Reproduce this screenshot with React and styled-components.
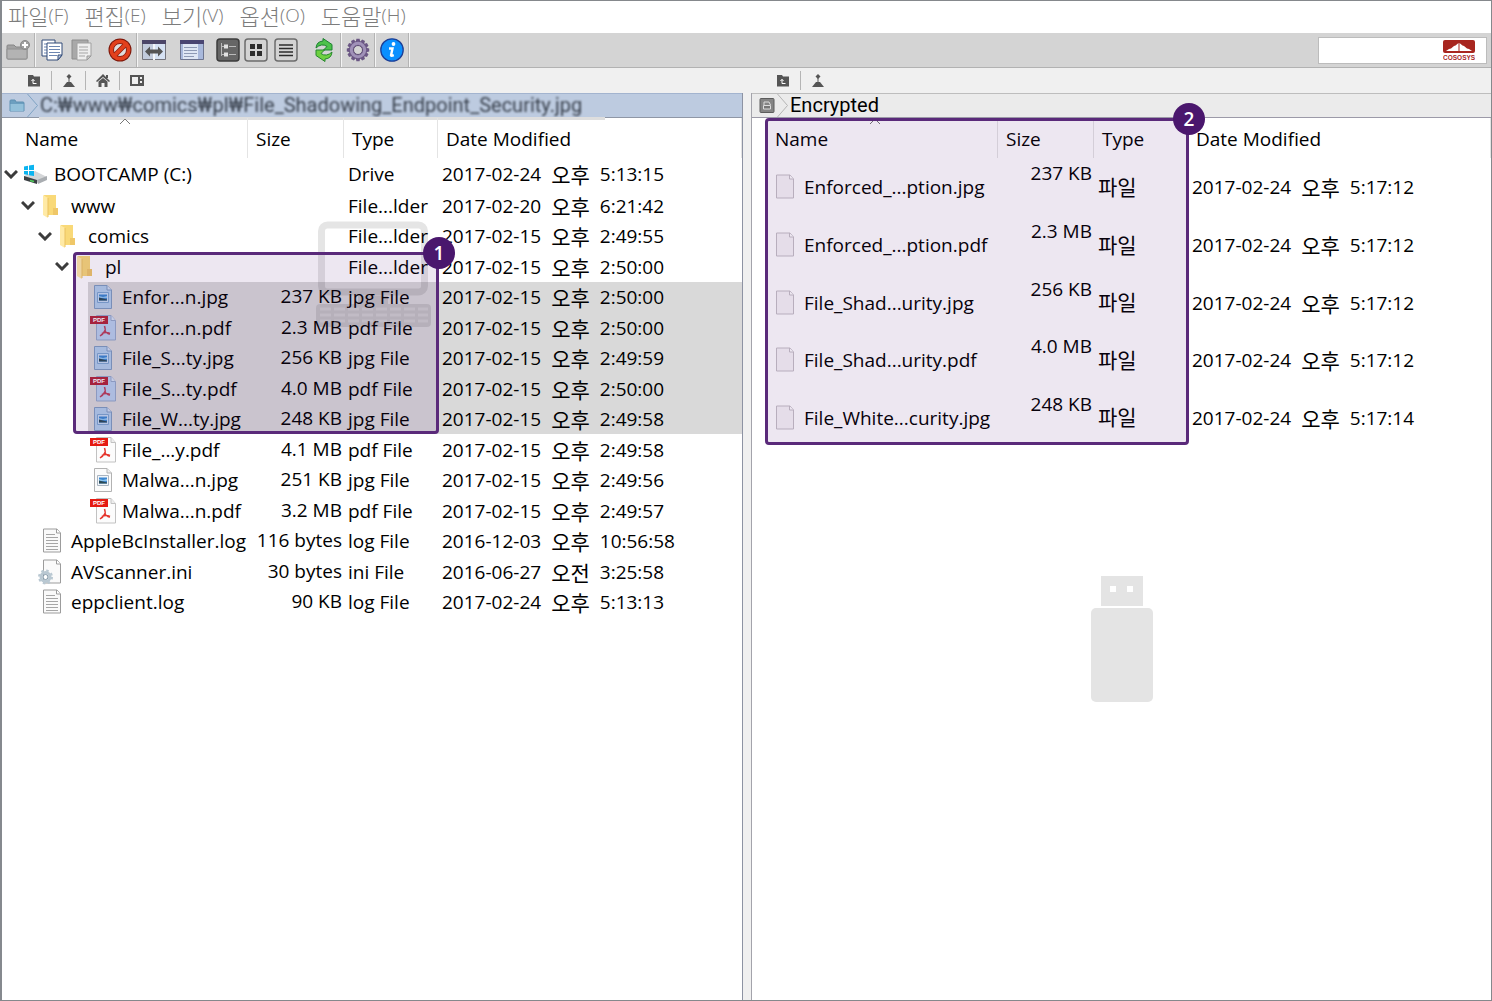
import React from "react";
import styled, { createGlobalStyle, css } from "styled-components";

const latin = '"Open Sans", "Noto Sans CJK KR", sans-serif';
const hangul = '"Noto Sans CJK KR", sans-serif';

const Global = createGlobalStyle`
  *, *::before, *::after { box-sizing: border-box; }
  body { margin: 0; background: #fff; font-family: ${latin}; font-size: 19px; color: #000; }
  button { font: inherit; color: inherit; background: none; border: 0; padding: 0; margin: 0; }
  svg { display: block; }
`;

const Frame = styled.div`
  min-height: 100vh;
  display: flex;
  flex-direction: column;
  border: 1px solid #85888c;
  border-left: 2px solid #85898e;
  background: #fff;
`;

const MenuBar = styled.nav`
  display: flex;
  align-items: center;
  gap: 16px;
  height: 32px;
  padding: 0 6px 4px;
`;
const MenuItem = styled.button`
  display: flex;
  align-items: center;
  font-size: 19px;
  font-weight: 300;
  line-height: 28px;
  color: #7c7c7c;
`;
const Korean = styled.span`
  font-family: ${hangul};
  font-weight: ${(p) => p.$weight || 400};
  font-size: ${(p) => (p.$weight ? 22 : 21)}px;
  line-height: ${(p) => (p.$weight ? 28 : 26)}px;
`;

const ToolBar = styled.div`
  display: flex;
  align-items: center;
  height: 35px;
  background: #d4d4d4;
  border-bottom: 1px solid #b2b2b2;
`;
const Group = styled.div`
  display: flex;
  align-items: center;
  height: 34px;
  padding: 0 3px 0 2px;
  border-right: 1px solid #f4f4f4;
  box-shadow: inset -1px 0 0 #b4b4b4;
`;
const ToolButton = styled.button`
  width: 28px;
  height: 28px;
  display: grid;
  place-items: center;
  margin-left: ${(p) => p.$gap || 0}px;
`;
const Search = styled.label`
  margin-left: auto;
  margin-right: 4px;
  display: flex;
  align-items: center;
  width: 169px;
  height: 27px;
  padding-right: 11px;
  background: #fff;
  border: 1px solid #bcbcbc;
`;
const SearchInput = styled.input`
  flex: 1;
  min-width: 0;
  height: 24px;
  border: 0;
  outline: 0;
  background: transparent;
  font: inherit;
`;

const Panes = styled.main`
  flex: 1;
  display: grid;
  grid-template-columns: 741fr 740fr;
  column-gap: 8px;
  background: #f0f0f0;
`;
const Pane = styled.section`
  display: flex;
  flex-direction: column;
  min-width: 0;
`;
const NavRow = styled.div`
  display: flex;
  align-items: center;
  height: 25px;
  padding-left: 15px;
`;
const NavButton = styled.button`
  width: 34px;
  height: 19px;
  display: grid;
  place-items: center;
  & + & { border-left: 1px solid #b5b5b5; }
`;
const PaneBody = styled.div`
  flex: 1;
  position: relative;
  background: #fff;
  ${(p) => (p.$second
    ? css`border-left: 1px solid #a3a3ab;`
    : css`border-right: 1px solid #8d93a3;`)}
`;
const PathBar = styled.div`
  position: relative;
  display: flex;
  align-items: center;
  height: 25px;
  padding-left: 7px;
  gap: 1px;
  background: ${(p) => (p.$active ? "#bdcbe0" : "#ebebeb")};
  border-top: 1px solid ${(p) => (p.$active ? "#a3b4cf" : "#bdbdbd")};
  border-bottom: 1px solid ${(p) => (p.$active ? "#8f97a6" : "#9c9aa8")};
  ${(p) => p.$active && css`
    &::after {
      content: "";
      position: absolute;
      left: 37px;
      top: 23px;
      width: 566px;
      height: 3px;
      background: #dedede;
    }
  `}
`;
const PathText = styled.span`
  font-family: Roboto, "Noto Sans CJK KR", sans-serif;
  font-size: 20px;
  line-height: 23px;
  white-space: nowrap;
  color: #000;
  ${(p) => p.$masked && css`
    color: #39414d;
    filter: blur(1px);
  `}
`;

const Table = styled.table`
  width: 100%;
  table-layout: fixed;
  border-collapse: collapse;
`;
const Col = styled.col`
  width: ${(p) => p.$w}px;
`;
const HeadCell = styled.th`
  position: relative;
  height: 40px;
  padding: 2px 0 0 ${(p) => (p.$first ? 23 : 8)}px;
  text-align: left;
  font-weight: 400;
  line-height: 28px;
  white-space: nowrap;
  box-shadow: inset -1px 0 0 #e4e4e4;
`;
const SortMark = styled.svg`
  position: absolute;
  top: 0;
  left: 50%;
  margin-left: -6px;
`;
const Row = styled.tr`
  height: ${(p) => (p.$tall ? 57 : 30)}px;
  &:nth-child(even) { height: ${(p) => (p.$tall ? 58 : 31)}px; }
  &:first-child { height: ${(p) => (p.$tall ? 58 : 32)}px; }
`;
const Cell = styled.td`
  padding: 0 0 0 4px;
  white-space: nowrap;
  line-height: 28px;
  vertical-align: middle;
  background: ${(p) => (p.$selected ? "#d9d9d9" : "transparent")};
`;
const NameCell = styled.td`
  height: inherit;
  padding: 0 0 0 ${(p) => p.$depth * 17}px;
`;
const NameLine = styled.div`
  display: flex;
  align-items: center;
  height: 100%;
`;
const Twist = styled.span`
  flex: none;
  width: 18px;
  display: grid;
  place-items: center;
`;
const Label = styled.span`
  flex: 1;
  align-self: stretch;
  display: flex;
  align-items: center;
  gap: 4px;
  line-height: 28px;
  white-space: nowrap;
  background: ${(p) => (p.$selected ? "#d9d9d9" : "transparent")};
`;
const SizeCell = styled(Cell)`
  padding: ${(p) => (p.$top ? "1px 2px 0 0" : "0 2px 2px 0")};
  text-align: right;
  vertical-align: ${(p) => (p.$top ? "top" : "middle")};
`;
const Stamp = styled.span`
  display: flex;
  align-items: center;
  gap: 10px;
`;

const Callout = styled.div`
  position: absolute;
  border: 3px solid #5a2a7a;
  border-radius: 4px;
  background: rgba(78, 22, 120, 0.1);
  left: ${(p) => p.$x}px;
  top: ${(p) => p.$y}px;
  width: ${(p) => p.$w}px;
  height: ${(p) => p.$h}px;
`;
const Badge = styled.span`
  position: absolute;
  top: -18px;
  right: -19px;
  width: 32px;
  height: 32px;
  border-radius: 50%;
  display: grid;
  place-items: center;
  background: #4a176d;
  color: #fff;
  font-size: 19px;
  font-weight: 600;
  line-height: 32px;
`;
const Ghost = styled.svg`
  position: absolute;
  left: ${(p) => p.$x}px;
  top: ${(p) => p.$y}px;
  pointer-events: none;
`;

/* toolbar drawings */
const NewFolder = () => (
  <svg width="26" height="24" viewBox="0 0 26 24">
    <path d="M2 20V8q0-1 1-1h6l2 2h10q1 0 1 1v10q0 1-1 1H3q-1 0-1-1z" fill="#a2a2a2" stroke="#868686" />
    <path d="M2 11h20v9q0 1-1 1H3q-1 0-1-1z" fill="#b3b3b3" stroke="#909090" />
    <circle cx="20" cy="7" r="4.5" fill="#a0a0a0" stroke="#8a8a8a" />
    <path d="M20 4v6M17 7h6" stroke="#fff" strokeWidth="2" />
  </svg>
);
const Copy = () => (
  <svg width="22" height="22" viewBox="0 0 22 22">
    <path d="M1 1h13v16H1z" fill="#fff" stroke="#304a78" />
    <path d="M3 5h4M3 8h4M3 11h4M3 14h4" stroke="#6c86b2" />
    <path d="M6 4h15v12l-4 5H6z" fill="#fff" stroke="#304a78" />
    <path d="M8 7.500h11M8 10.500h11M8 13.500h11M8 16.500h8" stroke="#6c86b2" />
    <path d="M21 16h-4v5z" fill="#b9c8e0" stroke="#304a78" />
  </svg>
);
const Paste = () => (
  <svg width="22" height="22" viewBox="0 0 22 22">
    <path d="M1 1h16v19H1z" fill="#a9a9a9" stroke="#8c8c8c" />
    <path d="M6 4h14v13l-4 4H6z" fill="#eee" stroke="#a0a0a0" />
    <path d="M8 8h9M8 11h9M8 14h9M8 17h6" stroke="#a5a5a5" />
    <path d="M20 17h-4v4z" fill="#ccc" stroke="#999" />
  </svg>
);
const Stop = () => (
  <svg width="24" height="24" viewBox="0 0 24 24">
    <circle cx="12" cy="12" r="11.500" fill="#7a160a" />
    <circle cx="12" cy="12" r="10.500" fill="#e2401c" />
    <circle cx="12" cy="12" r="6.500" fill="#dedede" stroke="#8c1a0a" />
    <path d="M16.500 7.500l-9 9" stroke="#8c1a0a" strokeWidth="5" />
    <path d="M17.500 6.500l-11 11" stroke="#e2401c" strokeWidth="3.500" />
  </svg>
);
const SplitView = () => (
  <svg width="24" height="20" viewBox="0 0 24 20">
    <path d="M.5.500h23v19H.5z" fill="#c2cbdc" stroke="#74747c" />
    <path d="M13 4h10v15H13z" fill="#d6e2f4" />
    <path d="M0 0h24v4H0z" fill="#4c4668" />
    <path d="M12 4v16" stroke="#f4f6fa" strokeWidth="2" />
    <path d="M3 11.500l5-5v3h8v-3l5 5-5 5v-3H8v3z" fill="#555" />
  </svg>
);
const DetailView = () => (
  <svg width="24" height="20" viewBox="0 0 24 20">
    <path d="M.5.500h23v19H.5z" fill="#a9b9dc" stroke="#6e7690" />
    <path d="M0 0h24v4H0z" fill="#4a4672" />
    <path d="M3 4h15v15H3z" fill="#dfe7f4" />
    <path d="M4 7.500h13M4 10.500h13M4 13.500h13M4 16.500h10" stroke="#8e9ab4" />
  </svg>
);
const ModeFrame = ({ dark, children }) => (
  <svg width="24" height="24" viewBox="0 0 24 24">
    <rect x="1" y="1" width="22" height="22" rx="3" fill={dark ? "#666" : "#d3d3d3"} stroke={dark ? "#3c3c3c" : "#6c6c6c"} strokeWidth="1.500" />
    {children}
  </svg>
);
const TreeMode = () => (
  <ModeFrame dark>
    <path d="M5.500 5v13M5.500 8.500h3M5.500 16.500h3M13 8.500h7M13 16.500h7" stroke="#bbb" />
    <path d="M8 6.500h4v4H8zM8 14.500h4v4H8z" fill="#e2e2e2" />
  </ModeFrame>
);
const GridMode = () => (
  <ModeFrame><path d="M6 6h5v5H6zM13 6h5v5h-5zM6 13h5v5H6zM13 13h5v5h-5z" fill="#2c2c2c" /></ModeFrame>
);
const ListMode = () => (
  <ModeFrame><path d="M5 7h14M5 10.500h14M5 14h14M5 17.500h14" stroke="#2c2c2c" strokeWidth="1.700" /></ModeFrame>
);
const refreshArrow = "M1 9.500Q1.500 3 8 2.500V0l9 6v5.500H8.500L12 8Q9.500 6 6.500 6.500 3.500 7 1 9.500z";
const Refresh = () => (
  <svg width="20" height="24" viewBox="0 0 20 24">
    <path d={refreshArrow} fill="#4cc24a" stroke="#1d8030" transform="translate(1 .5)" />
    <path d={refreshArrow} fill="#6ed040" stroke="#24882c" transform="rotate(180 9.500 12) translate(0 .5)" />
  </svg>
);
const teeth = Array.from({ length: 12 }, (_, i) => i * 30);
const Gear = () => (
  <svg width="24" height="24" viewBox="0 0 24 24">
    {teeth.map((a) => (
      <path key={a} d="M10.400 0.800h3.200l.8 4h-4.800z" fill="#6b5784" transform={`rotate(${a} 12 12)`} />
    ))}
    <circle cx="12" cy="12" r="6.800" fill="none" stroke="#6b5784" strokeWidth="4.500" />
    <circle cx="12" cy="12" r="6.700" fill="none" stroke="#a091b8" strokeWidth="3" />
    <circle cx="12" cy="12" r="4.500" fill="#d4d4d4" stroke="#5c4a74" />
  </svg>
);
const Info = () => (
  <svg width="24" height="24" viewBox="0 0 24 24">
    <circle cx="12" cy="12" r="11.200" fill="#0a90ff" stroke="#1d3f96" strokeWidth="1.300" />
    <circle cx="13.500" cy="6" r="1.900" fill="#fff" />
    <path d="M9 10.500h3.500L11 17.500q0 .7 2.800-.3" fill="none" stroke="#fff" strokeWidth="2.400" />
  </svg>
);
const Brand = () => (
  <svg width="32" height="20" viewBox="0 0 32 20" aria-label="CoSoSys">
    <rect width="32" height="13" rx="2" fill="#a8261f" />
    <path d="M3 11l3-2 2-.5L11 6l1.500-.5L15.500 3v8zM29 11l-3-2-2-.5L21 6l-1.500-.5L16.500 3v8z" fill="#fff" />
    <text x="0" y="20" fill="#a8261f" fontFamily="Liberation Sans, sans-serif" fontWeight="700" fontSize="6.500">COSOSYS</text>
  </svg>
);

/* navigation drawings */
const FolderUp = () => (
  <svg width="14" height="12" viewBox="0 0 14 12">
    <path d="M1 0h5l1 1.500h6v10H1z" fill="#555" />
    <path d="M9.500 8.500H6V5M4.500 6L6 4.200 7.500 6" fill="none" stroke="#fff" />
  </svg>
);
const Eject = () => (
  <svg width="12" height="14" viewBox="0 0 12 14">
    <path d="M6 0l2.500 2.500L6 5 3.500 2.500z" fill="#555" />
    <path d="M5.500 4h1v5h-1zM0 13l4-5h4l4 5z" fill="#555" />
  </svg>
);
const Home = () => (
  <svg width="14" height="13" viewBox="0 0 14 13">
    <path d="M7 0l7 7-1 1-6-5-6 5-1-1zM10 1h2v3h-2z" fill="#555" />
    <path d="M2.500 7.500L7 4l4.500 3.500V13h-3V9h-3v4h-3z" fill="#555" />
  </svg>
);
const Computer = () => (
  <svg width="14" height="11" viewBox="0 0 14 11">
    <path d="M0 0h14v11H0z" fill="#555" />
    <path d="M2 2h6v7H2zM10 2h2v2h-2zM10 6h2v2h-2z" fill="#f0f0f0" />
  </svg>
);
const BlueFolder = () => (
  <svg width="16" height="13" viewBox="0 0 16 13">
    <path d="M1 12V2q0-1 1-1h4l1 2h7q1 0 1 1v8z" fill="#6c9fc0" stroke="#5e90b2" />
    <path d="M1.500 5h13v7h-13z" fill="#93c0da" />
  </svg>
);
const DriveBox = () => (
  <svg width="16" height="15" viewBox="0 0 16 15">
    <rect x="1" y=".5" width="14" height="14" rx="1" fill="#858585" stroke="#5c5c5c" />
    <path d="M5 7V4h5l1.500 3" fill="none" stroke="#ddd" />
    <path d="M4.500 7.500h7v3.500h-7z" fill="#777" stroke="#ddd" />
  </svg>
);
const Arrow = ({ color }) => (
  <svg width="13" height="23" viewBox="0 0 13 23">
    <path d="M1.500 0l10 11.500-10 11.500" fill="none" stroke={color} />
  </svg>
);

/* tree drawings */
const Chevron = () => (
  <svg width="14" height="9" viewBox="0 0 14 9">
    <path d="M1 1l6 6 6-6" fill="none" stroke="#3c3c3c" strokeWidth="3" />
  </svg>
);
const DriveIcon = () => (
  <svg width="30" height="22" viewBox="0 0 30 22">
    <path d="M4 13l11-5 12 6-9 6L4 16z" fill="#d4d6d8" />
    <path d="M4 13l13 4v4L4 17z" fill="#3b4044" />
    <path d="M17 17l10-4v4l-9 4z" fill="#a9adb1" />
    <path d="M10 17.500l4 1" stroke="#4fd05a" strokeWidth="1.500" />
    <path d="M4 3.500l4-.7V7H4zM9 2.600l5-.8V7H9zM4 8h4v4l-4-.7zM9 8h5v5l-5-.8z" fill="#0cb4f0" />
  </svg>
);
const FolderIcon = () => (
  <svg width="30" height="24" viewBox="0 0 30 24">
    <path d="M7 1h12v15h2v5H9z" fill="#f9d978" />
    <path d="M16 14h5v7h-5z" fill="#efc768" />
    <path d="M6 1l5 3v20l-5-3z" fill="#ffeaa6" />
    <path d="M11 4v19" stroke="#eac260" />
  </svg>
);
const ImageIcon = ({ tinted }) => (
  <svg width="30" height="24" viewBox="0 0 30 24">
    <path d="M6.500.500H19l4.500 4.500v18.500h-17z" fill={tinted ? "#b0cdea" : "#fbfbfb"} stroke={tinted ? "#7e9cc0" : "#b2b2b2"} />
    <path d="M19 .5V5h4.500" fill={tinted ? "#d0e0f2" : "#eee"} stroke={tinted ? "#7e9cc0" : "#b2b2b2"} />
    <path d="M9.500 7.500h11v10h-11z" fill={tinted ? "#c4daf0" : "#f2f6fa"} stroke={tinted ? "#7ba5d0" : "#a9b4c0"} />
    <path d="M11 9.500h8v6h-8z" fill="#3b86d0" />
    <path d="M11 11l4 1 4-1v2h-8z" fill="#8cc4ee" />
    <path d="M11 12.500l4 1 4 1v1h-8z" fill="#2b4a55" />
  </svg>
);
const PdfIcon = ({ tinted }) => (
  <svg width="30" height="26" viewBox="0 0 30 26">
    <path d="M8.500.500H23l4.500 5v19.500h-19z" fill={tinted ? "#b8d0ec" : "#fcfcfc"} stroke={tinted ? "#93a9c9" : "#c2c2c2"} />
    <path d="M23 .5v5h4.500" fill={tinted ? "#d4e2f2" : "#eee"} stroke={tinted ? "#93a9c9" : "#c2c2c2"} />
    <path d="M2 1h18v8H2z" fill={tinted ? "#b02438" : "#e51a12"} />
    <text x="5" y="7" fill="#fff" fontFamily="Liberation Sans, sans-serif" fontWeight="700" fontSize="6">PDF</text>
    <path d="M16.500 11q1.500 5 0 5.500Q15 19 12 21M16.500 15q2 4 5.500 4M14 18.500q4-2 8 0" fill="none" stroke={tinted ? "#b8405a" : "#e5352c"} strokeWidth="1.500" />
  </svg>
);
const LogIcon = () => (
  <svg width="30" height="26" viewBox="0 0 30 26">
    <path d="M6.500 1H20l3.500 4v19h-17z" fill="#fafafa" stroke="#9c9c9c" />
    <path d="M19.500 1v4h4" fill="#fff" stroke="#9c9c9c" />
    <path d="M9 6.500h9M9 9.500h12M9 12.500h12M9 15.500h12M9 18.500h12M9 21.500h12" stroke="#a6a6a6" />
  </svg>
);
const IniIcon = () => (
  <svg width="30" height="26" viewBox="0 0 30 26">
    <path d="M6.500 1H20l3.500 4v19h-17z" fill="#fafafa" stroke="#9c9c9c" />
    <path d="M19.500 1v4h4" fill="#fff" stroke="#9c9c9c" />
    <circle cx="8.500" cy="18" r="4.500" fill="none" stroke="#b9c8d2" strokeWidth="3" />
    <circle cx="8.500" cy="18" r="6.500" fill="none" stroke="#b9c8d2" strokeWidth="2" strokeDasharray="2.500 2.600" />
    <circle cx="8.500" cy="18" r="2.500" fill="#fff" stroke="#8096a6" />
  </svg>
);
const BlankIcon = () => (
  <svg width="30" height="26" viewBox="0 0 30 26">
    <path d="M6.500 1H20l3.500 4v19h-17z" fill="#f6f4f6" stroke="#c4c0c6" />
    <path d="M19.500 1v4h4" fill="#fff" stroke="#c4c0c6" />
  </svg>
);
const icons = { drive: DriveIcon, folder: FolderIcon, image: ImageIcon, pdf: PdfIcon, log: LogIcon, ini: IniIcon, blank: BlankIcon };

const toolGroups = [
  [["New folder", NewFolder, 0]],
  [["Copy", Copy, 0], ["Paste", Paste, 2], ["Delete", Stop, 10]],
  [["Split view", SplitView, 0], ["Details", DetailView, 10], ["Tree", TreeMode, 8], ["Grid", GridMode, 0], ["List", ListMode, 2], ["Refresh", Refresh, 10]],
  [["Settings", Gear, 0]],
  [["Information", Info, 0]],
];

const menus = [["파일", "(F)"], ["편집", "(E)"], ["보기", "(V)"], ["옵션", "(O)"], ["도움말", "(H)"]];

const local = [
  { depth: 0, open: true, icon: "drive", name: "BOOTCAMP (C:)", type: "Drive", date: ["2017-02-24", "오후", "5:13:15"] },
  { depth: 1, open: true, icon: "folder", name: "www", type: "File...lder", date: ["2017-02-20", "오후", "6:21:42"] },
  { depth: 2, open: true, icon: "folder", name: "comics", type: "File...lder", date: ["2017-02-15", "오후", "2:49:55"] },
  { depth: 3, open: true, icon: "folder", name: "pl", type: "File...lder", date: ["2017-02-15", "오후", "2:50:00"] },
  { depth: 4, sel: true, icon: "image", name: "Enfor...n.jpg", size: "237 KB", type: "jpg File", date: ["2017-02-15", "오후", "2:50:00"] },
  { depth: 4, sel: true, icon: "pdf", name: "Enfor...n.pdf", size: "2.3 MB", type: "pdf File", date: ["2017-02-15", "오후", "2:50:00"] },
  { depth: 4, sel: true, icon: "image", name: "File_S...ty.jpg", size: "256 KB", type: "jpg File", date: ["2017-02-15", "오후", "2:49:59"] },
  { depth: 4, sel: true, icon: "pdf", name: "File_S...ty.pdf", size: "4.0 MB", type: "pdf File", date: ["2017-02-15", "오후", "2:50:00"] },
  { depth: 4, sel: true, icon: "image", name: "File_W...ty.jpg", size: "248 KB", type: "jpg File", date: ["2017-02-15", "오후", "2:49:58"] },
  { depth: 4, icon: "pdf", name: "File_...y.pdf", size: "4.1 MB", type: "pdf File", date: ["2017-02-15", "오후", "2:49:58"] },
  { depth: 4, icon: "image", name: "Malwa...n.jpg", size: "251 KB", type: "jpg File", date: ["2017-02-15", "오후", "2:49:56"] },
  { depth: 4, icon: "pdf", name: "Malwa...n.pdf", size: "3.2 MB", type: "pdf File", date: ["2017-02-15", "오후", "2:49:57"] },
  { depth: 1, icon: "log", name: "AppleBcInstaller.log", size: "116 bytes", type: "log File", date: ["2016-12-03", "오후", "10:56:58"] },
  { depth: 1, icon: "ini", name: "AVScanner.ini", size: "30 bytes", type: "ini File", date: ["2016-06-27", "오전", "3:25:58"] },
  { depth: 1, icon: "log", name: "eppclient.log", size: "90 KB", type: "log File", date: ["2017-02-24", "오후", "5:13:13"] },
];

const encrypted = [
  ["Enforced_...ption.jpg", "237 KB", "5:17:12"],
  ["Enforced_...ption.pdf", "2.3 MB", "5:17:12"],
  ["File_Shad...urity.jpg", "256 KB", "5:17:12"],
  ["File_Shad...urity.pdf", "4.0 MB", "5:17:12"],
  ["File_White...curity.jpg", "248 KB", "5:17:14"],
].map(([name, size, time]) => ({ depth: 0, icon: "blank", name, size, type: "파일", korean: true, date: ["2017-02-24", "오후", time] }));

function FileTable({ rows, tall }) {
  return (
    <Table>
      <colgroup><Col $w={246} /><Col $w={96} /><Col $w={94} /><col /></colgroup>
      <thead>
        <tr>
          <HeadCell $first>
            Name
            <SortMark width="12" height="7" viewBox="0 0 12 7"><path d="M1 6l5-5 5 5" fill="none" stroke="#777" /></SortMark>
          </HeadCell>
          <HeadCell>Size</HeadCell>
          <HeadCell>Type</HeadCell>
          <HeadCell>Date Modified</HeadCell>
        </tr>
      </thead>
      <tbody>
        {rows.map((r) => {
          const Icon = icons[r.icon];
          return (
            <Row key={r.name} $tall={tall}>
              <NameCell $depth={r.depth}>
                <NameLine>
                  <Twist>{r.open && <Chevron />}</Twist>
                  <Label $selected={r.sel}><Icon tinted={r.sel} />{r.name}</Label>
                </NameLine>
              </NameCell>
              <SizeCell $selected={r.sel} $top={tall}>{r.size}</SizeCell>
              <Cell $selected={r.sel}>{r.korean ? <Korean>{r.type}</Korean> : r.type}</Cell>
              <Cell $selected={r.sel}>
                <Stamp><span>{r.date[0]}</span><Korean>{r.date[1]}</Korean><span>{r.date[2]}</span></Stamp>
              </Cell>
            </Row>
          );
        })}
      </tbody>
    </Table>
  );
}

const keyRows = [88, 94, 100];

export default function App() {
  return (
    <Frame>
      <Global />
      <MenuBar>
        {menus.map(([word, key]) => (
          <MenuItem key={key}><Korean $weight={300}>{word}</Korean>{key}</MenuItem>
        ))}
      </MenuBar>
      <ToolBar>
        {toolGroups.map((group, i) => (
          <Group key={i}>
            {group.map(([label, Icon, gap]) => (
              <ToolButton key={label} aria-label={label} $gap={gap}><Icon /></ToolButton>
            ))}
          </Group>
        ))}
        <Search>
          <SearchInput type="text" aria-label="Search" />
          <Brand />
        </Search>
      </ToolBar>
      <Panes>
        <Pane>
          <NavRow>
            <NavButton aria-label="Parent folder"><FolderUp /></NavButton>
            <NavButton aria-label="Root"><Eject /></NavButton>
            <NavButton aria-label="Home"><Home /></NavButton>
            <NavButton aria-label="Computer"><Computer /></NavButton>
          </NavRow>
          <PaneBody>
            <PathBar $active>
              <BlueFolder /><Arrow color="#7fa3c4" />
              <PathText $masked>C:₩www₩comics₩pl₩File_Shadowing_Endpoint_Security.jpg</PathText>
            </PathBar>
            <FileTable rows={local} />
            <Ghost $x={314} $y={128} width="116" height="108" viewBox="0 0 116 108">
              <g fill="none" stroke="#000" strokeOpacity="0.1">
                <rect x="5.500" y="4" width="103" height="67" rx="6" strokeWidth="7" />
              </g>
              <g fill="#000" fillOpacity="0.1">
                <path d="M42 75h30v8H42z" />
                <rect x="0" y="83" width="115" height="23" rx="4" />
              </g>
              {keyRows.map((y) => (
                <path key={y} d={`M4 ${y}h108`} stroke="#fff" strokeOpacity="0.2" strokeWidth="3" strokeDasharray="11 3" />
              ))}
            </Ghost>
            <Callout $x={71} $y={159} $w={366} $h={182}><Badge>1</Badge></Callout>
          </PaneBody>
        </Pane>
        <Pane>
          <NavRow>
            <NavButton aria-label="Parent folder"><FolderUp /></NavButton>
            <NavButton aria-label="Root"><Eject /></NavButton>
          </NavRow>
          <PaneBody $second>
            <PathBar>
              <DriveBox /><Arrow color="#b5b5b5" />
              <PathText>Encrypted</PathText>
            </PathBar>
            <FileTable rows={encrypted} tall />
            <Ghost $x={339} $y={483} width="62" height="126" viewBox="0 0 62 126">
              <path d="M10 0h42v30H10zM19 10v6h6v-6zM36 10v6h6v-6z" fill="#e4e4e4" fillRule="evenodd" />
              <rect y="32" width="62" height="94" rx="5" fill="#e4e4e4" />
            </Ghost>
            <Callout $x={13} $y={25} $w={424} $h={327}><Badge>2</Badge></Callout>
          </PaneBody>
        </Pane>
      </Panes>
    </Frame>
  );
}
